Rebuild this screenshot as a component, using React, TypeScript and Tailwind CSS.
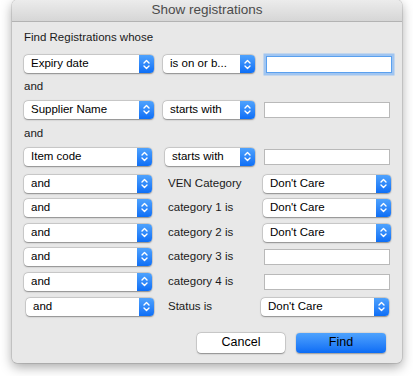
import React from 'react';

const font = { fontFamily: '"Liberation Sans", Arial, sans-serif' };

const Chevrons = () => (
  <svg width="7" height="11" viewBox="0 0 7 11" fill="none" stroke="white" strokeWidth="1.4" strokeLinecap="round" strokeLinejoin="round">
    <path d="M1 4 L3.5 1.5 L6 4" />
    <path d="M1 7 L3.5 9.5 L6 7" />
  </svg>
);

const Select = ({ value, className = '' }: { value: string; className?: string }) => (
  <div className={`flex h-[18px] items-stretch rounded-[4px] bg-white shadow-[0_0.5px_1.5px_rgba(0,0,0,0.35)] ring-[0.5px] ring-black/15 ${className}`}>
    <div className="flex flex-1 items-center truncate pl-[7px] text-[11.5px] leading-none text-black">{value}</div>
    <div className="flex w-[15px] items-center justify-center rounded-r-[4px] bg-gradient-to-b from-[#4ea2fd] to-[#0b6ef6]">
      <Chevrons />
    </div>
  </div>
);

const Field = ({ focused = false, className = '' }: { focused?: boolean; className?: string }) => (
  <div
    className={`h-[16px] bg-white ${
      focused ? 'border border-[#5aa0ee] ring-[2.5px] ring-[#8dbcf3]/80' : 'border border-[#b9b9b9]'
    } ${className}`}
  />
);

const Label = ({ text }: { text: string }) => (
  <div className="text-[11.5px] leading-none text-[#1a1a1a]">{text}</div>
);

const bottomRows = [
  { label: 'VEN Category', kind: 'select', mt: 'mt-[9px]' },
  { label: 'category 1 is', kind: 'select', mt: 'mt-[6px]' },
  { label: 'category 2 is', kind: 'select', mt: 'mt-[7px]' },
  { label: 'category 3 is', kind: 'field', mt: 'mt-[6px]' },
  { label: 'category 4 is', kind: 'field', mt: 'mt-[7px]' },
  { label: 'Status is', kind: 'select', mt: 'mt-[7px]' },
];

export default function App() {
  return (
    <div className="min-h-[376px] w-[413px] bg-white pl-[12px]" style={font}>
      <div className="flex h-[363px] w-[390px] flex-col overflow-hidden rounded-[5px] bg-[#e8e8e8] shadow-[0_4px_12px_rgba(0,0,0,0.35)] ring-[0.5px] ring-black/20">
        {/* Title bar */}
        <div className="flex h-[22px] items-center justify-center border-b border-[#b3b3b3] bg-gradient-to-b from-[#ececec] to-[#d6d6d6] text-[13.5px] text-[#4b4b4b]">
          Show registrations
        </div>

        <div className="flex flex-col pl-[12px]">
          <div className="mt-[10px]">
            <Label text="Find Registrations whose" />
          </div>

          {/* Row 1 */}
          <div className="mt-[11.5px] flex items-center">
            <Select value="Expiry date" className="w-[130px]" />
            <Select value="is on or b..." className="ml-[9px] w-[92px]" />
            <Field focused className="ml-[11px] h-[17px] w-[126px]" />
          </div>
          <div className="mt-[8px]"><Label text="and" /></div>

          {/* Row 2 */}
          <div className="mt-[8px] flex items-center">
            <Select value="Supplier Name" className="w-[130px]" />
            <Select value="starts with" className="ml-[9px] w-[92px]" />
            <Field className="ml-[9px] w-[126px]" />
          </div>
          <div className="mt-[9px]"><Label text="and" /></div>

          {/* Row 3 */}
          <div className="mt-[8.5px] flex items-center">
            <Select value="Item code" className="w-[128px]" />
            <Select value="starts with" className="ml-[13px] w-[90px]" />
            <Field className="ml-[9px] w-[126px]" />
          </div>

          {bottomRows.map((r, i) => (
            <div key={r.label} className={`${r.mt} flex items-center`}>
              <Select value="and" className={i === 5 ? 'ml-[2px] w-[128px]' : 'w-[128px]'} />
              <div className={`${i === 5 ? 'w-[107px] pl-[14px]' : 'w-[111px] pl-[16px]'}`}>
                <Label text={r.label} />
              </div>
              {r.kind === 'select' ? (
                <Select value="Don't Care" className="w-[128px]" />
              ) : (
                <Field className="ml-[1px] w-[126px]" />
              )}
            </div>
          ))}

          {/* Buttons */}
          <div className="mt-[17px] flex justify-end gap-[11px] pr-[16px]">
            <button className="h-[20px] w-[88px] rounded-[4px] bg-white text-[12.5px] text-black shadow-[0_0.5px_1.5px_rgba(0,0,0,0.35)] ring-[0.5px] ring-black/15">
              Cancel
            </button>
            <button className="h-[20px] w-[90px] rounded-[4px] bg-gradient-to-b from-[#4ea2fd] to-[#0a6cf5] text-[12.5px] text-black shadow-[0_0.5px_1.5px_rgba(0,0,0,0.35)]">
              Find
            </button>
          </div>
        </div>
      </div>
    </div>
  );
}
